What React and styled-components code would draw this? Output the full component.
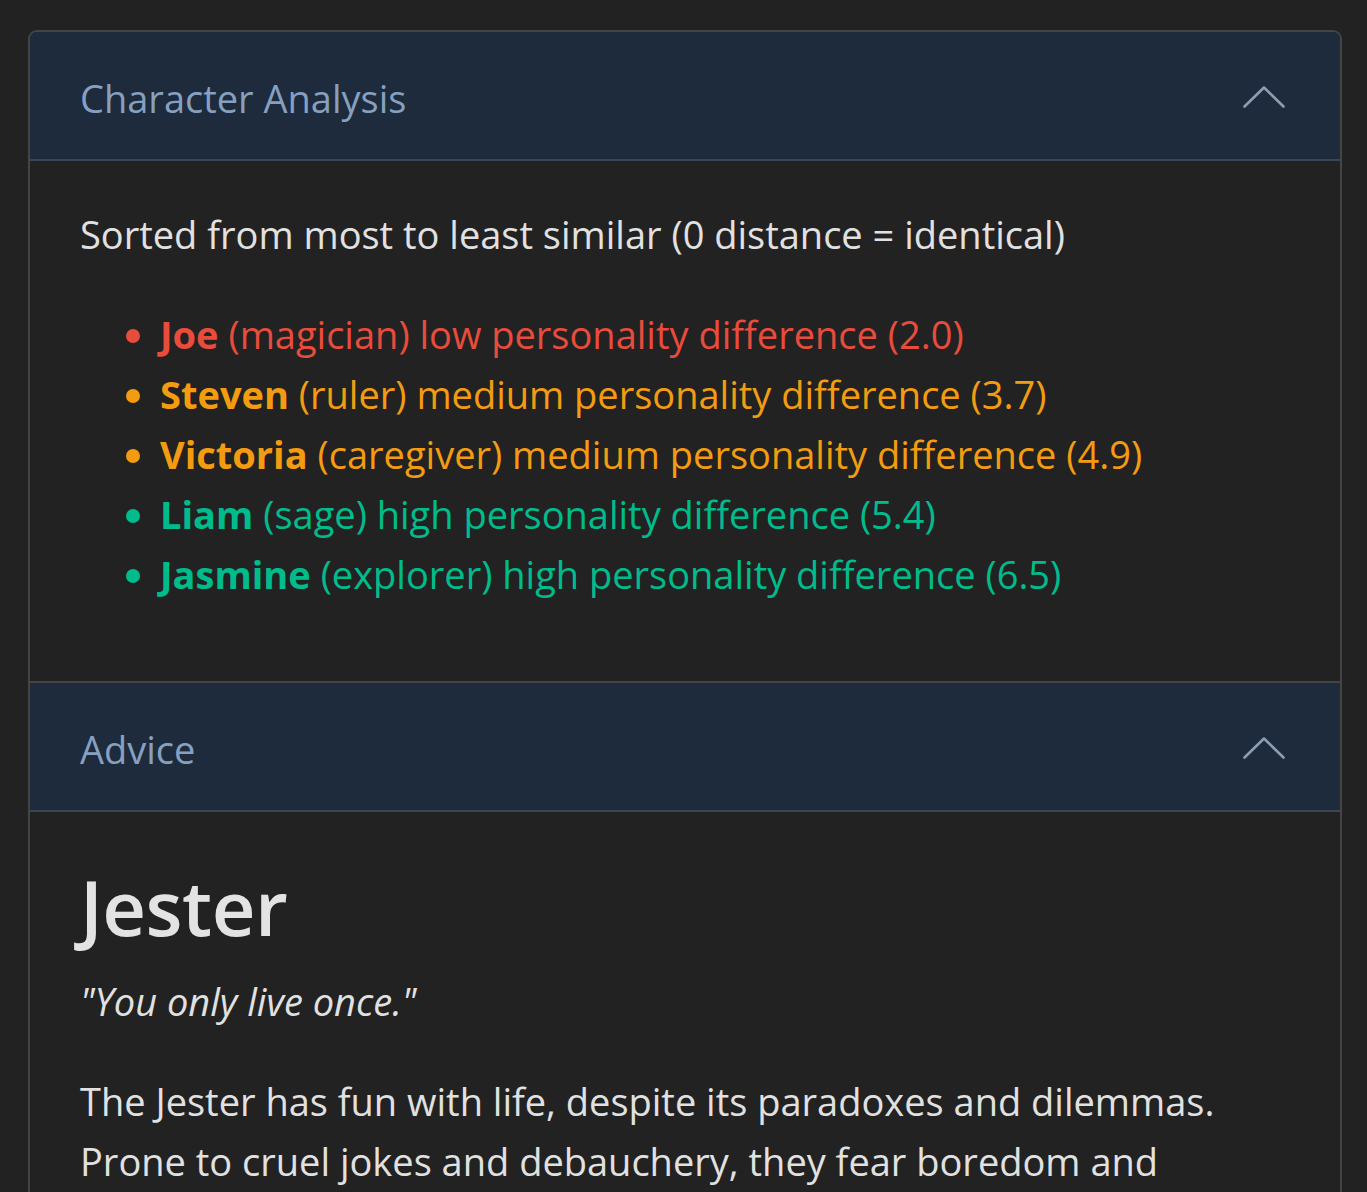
import React from "react";
import styled, { createGlobalStyle } from "styled-components";

const GlobalStyle = createGlobalStyle`
  html, body {
    margin: 0;
    padding: 0;
    background: #222222;
  }
  body {
    font-family: "Open Sans", "Noto Sans", sans-serif;
    color: #e1e1e1;
    -webkit-font-smoothing: antialiased;
  }
`;

const Page = styled.div`
  padding: 30px 25px 0 28px;
`;

const Accordion = styled.div`
  border: 2px solid #444444;
  border-bottom: none;
  border-radius: 9px 9px 0 0;
  overflow: hidden;
`;

const Item = styled.section`
  & + & {
    border-top: 2px solid #444444;
  }
`;

const Header = styled.button`
  display: flex;
  align-items: center;
  justify-content: space-between;
  width: 100%;
  box-sizing: border-box;
  height: 129px;
  padding: 5px 55px 0 50px;
  margin: 0;
  border: none;
  border-bottom: 2px solid #3a4556;
  background: #1d2b3d;
  color: #87a0bf;
  font-family: "Open Sans", "Noto Sans", sans-serif;
  font-size: 38px;
  line-height: 60px;
  text-align: left;
  cursor: pointer;
`;

const Chevron = styled.svg`
  width: 42px;
  height: 22px;
  flex: none;
  margin-top: -3px;
`;

const Body = styled.div`
  padding: 43px 50px 37px;
  font-size: 38px;
  line-height: 60px;
`;

const Para = styled.p`
  margin: 0 0 40px;
`;

const List = styled.ul`
  margin: 0 0 40px;
  padding-left: 80px;
`;

const Entry = styled.li`
  color: ${p => p.$color};
`;

const Name = styled.strong`
  font-weight: 700;
`;

const Title = styled.h1`
  margin: 4px 0 16px;
  font-size: 76px;
  line-height: 96px;
  font-weight: 600;
  color: #e3e3e3;
  letter-spacing: -0.5px;
`;

const Quote = styled.p`
  margin: 0 0 40px;
  font-style: italic;
`;

const COLORS = {
  low: "#e74c3c",
  medium: "#f39c12",
  high: "#00bc8c",
};

const characters = [
  { name: "Joe", role: "magician", level: "low", value: "2.0" },
  { name: "Steven", role: "ruler", level: "medium", value: "3.7" },
  { name: "Victoria", role: "caregiver", level: "medium", value: "4.9" },
  { name: "Liam", role: "sage", level: "high", value: "5.4" },
  { name: "Jasmine", role: "explorer", level: "high", value: "6.5" },
];

function ChevronUp() {
  return (
    <Chevron viewBox="0 0 42 22" fill="none">
      <polyline
        points="1.5,20.5 21,1.5 40.5,20.5"
        stroke="#8a9db5"
        strokeWidth="2.6"
        strokeLinecap="round"
        strokeLinejoin="round"
      />
    </Chevron>
  );
}

export default function App() {
  return (
    <>
      <GlobalStyle />
      <Page>
        <Accordion>
          <Item>
            <Header type="button">
              <span>Character Analysis</span>
              <ChevronUp />
            </Header>
            <Body>
              <Para>Sorted from most to least similar (0 distance = identical)</Para>
              <List>
                {characters.map(c => (
                  <Entry key={c.name} $color={COLORS[c.level]}>
                    <Name>{c.name}</Name> ({c.role}) {c.level} personality difference ({c.value})
                  </Entry>
                ))}
              </List>
            </Body>
          </Item>
          <Item>
            <Header type="button">
              <span>Advice</span>
              <ChevronUp />
            </Header>
            <Body>
              <Title>Jester</Title>
              <Quote>"You only live once."</Quote>
              <Para>
                The Jester has fun with life, despite its paradoxes and dilemmas. Prone to cruel
                jokes and debauchery, they fear boredom and
              </Para>
            </Body>
          </Item>
        </Accordion>
      </Page>
    </>
  );
}
